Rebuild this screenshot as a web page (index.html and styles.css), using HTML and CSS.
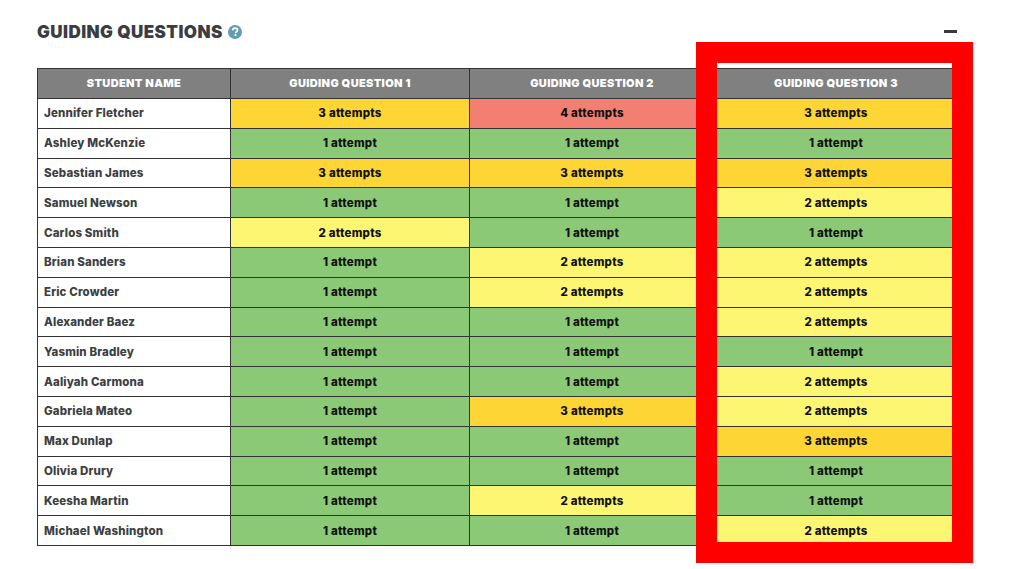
FILE: index.html
```html
<!DOCTYPE html>
<html lang="en">
<head>
<meta charset="utf-8">
<title>Guiding Questions</title>
<link rel="stylesheet" href="styles.css">
</head>
<body>
<main class="panel">
  <header class="panel-head">
    <h1 class="title">GUIDING QUESTIONS
      <svg class="help" viewBox="0 0 14 14" width="14" height="14" aria-hidden="true"><circle cx="7" cy="7" r="7" fill="#5f9fae"/><path d="M4.6 5.4C4.7 4 5.7 3.2 7.1 3.2C8.5 3.2 9.5 4 9.5 5.2C9.5 6.6 7.6 6.8 7.6 8.2" fill="none" stroke="#fff" stroke-width="1.7"/><rect x="6.6" y="9.2" width="1.8" height="1.8" fill="#fff"/></svg>
    </h1>
    <span class="collapse"></span>
  </header>
  <table class="grid">
    <colgroup><col class="c-name"><col class="c-q"><col class="c-q3"><col class="c-q4"></colgroup>
    <thead>
      <tr><th>STUDENT NAME</th><th>GUIDING QUESTION 1</th><th>GUIDING QUESTION 2</th><th>GUIDING QUESTION 3</th></tr>
    </thead>
    <tbody>
      <tr><td class="name">Jennifer Fletcher</td><td class="a3">3 attempts</td><td class="a4">4 attempts</td><td class="a3">3 attempts</td></tr>
      <tr><td class="name">Ashley McKenzie</td><td class="a1">1 attempt</td><td class="a1">1 attempt</td><td class="a1">1 attempt</td></tr>
      <tr><td class="name">Sebastian James</td><td class="a3">3 attempts</td><td class="a3">3 attempts</td><td class="a3">3 attempts</td></tr>
      <tr><td class="name">Samuel Newson</td><td class="a1">1 attempt</td><td class="a1">1 attempt</td><td class="a2">2 attempts</td></tr>
      <tr><td class="name">Carlos Smith</td><td class="a2">2 attempts</td><td class="a1">1 attempt</td><td class="a1">1 attempt</td></tr>
      <tr><td class="name">Brian Sanders</td><td class="a1">1 attempt</td><td class="a2">2 attempts</td><td class="a2">2 attempts</td></tr>
      <tr><td class="name">Eric Crowder</td><td class="a1">1 attempt</td><td class="a2">2 attempts</td><td class="a2">2 attempts</td></tr>
      <tr><td class="name">Alexander Baez</td><td class="a1">1 attempt</td><td class="a1">1 attempt</td><td class="a2">2 attempts</td></tr>
      <tr><td class="name">Yasmin Bradley</td><td class="a1">1 attempt</td><td class="a1">1 attempt</td><td class="a1">1 attempt</td></tr>
      <tr><td class="name">Aaliyah Carmona</td><td class="a1">1 attempt</td><td class="a1">1 attempt</td><td class="a2">2 attempts</td></tr>
      <tr><td class="name">Gabriela Mateo</td><td class="a1">1 attempt</td><td class="a3">3 attempts</td><td class="a2">2 attempts</td></tr>
      <tr><td class="name">Max Dunlap</td><td class="a1">1 attempt</td><td class="a1">1 attempt</td><td class="a3">3 attempts</td></tr>
      <tr><td class="name">Olivia Drury</td><td class="a1">1 attempt</td><td class="a1">1 attempt</td><td class="a1">1 attempt</td></tr>
      <tr><td class="name">Keesha Martin</td><td class="a1">1 attempt</td><td class="a2">2 attempts</td><td class="a1">1 attempt</td></tr>
      <tr><td class="name">Michael Washington</td><td class="a1">1 attempt</td><td class="a1">1 attempt</td><td class="a2">2 attempts</td></tr>
    </tbody>
  </table>
  <div class="highlight"></div>
</main>
</body>
</html>
```
FILE: styles.css
```css
html, body { margin: 0; padding: 0; background: #fff; }
body { font-family: "Inter", "Liberation Sans", sans-serif; }
.panel { position: relative; width: 1009px; height: 569px; box-sizing: border-box; padding: 21px 52px 0 37px; overflow: hidden; }
.panel-head { display: flex; justify-content: space-between; align-items: center; height: 21px; }
.title { margin: 0; padding-top: 2px; display: flex; align-items: center; gap: 5px; font-size: 17px; font-weight: 900; color: #3a3d42; letter-spacing: 0.45px; line-height: 21px; }
.help { margin-bottom: 2px; }
.collapse { display: block; width: 13px; height: 3px; background: #3a3a3a; }
.grid { margin-top: 26px; width: 920px; table-layout: fixed; border-collapse: collapse; font-size: 11.5px; font-weight: 800; letter-spacing: 0.25px; line-height: 14px; }
.c-name { width: 193px; }
.c-q { width: 239px; }
.c-q3 { width: 245px; }
.c-q4 { width: 243px; }
.grid th, .grid td { border: 1px solid #333; padding: 0; text-align: center; }
.grid thead tr { height: 30px; }
.grid tbody tr { height: 29.8px; }
.grid th { background: #808080; color: #fff; font-size: 11px; font-weight: 900; letter-spacing: 0.35px; padding-bottom: 1px; }
.grid td { color: #111; }
.grid td.name { text-align: left; padding-left: 6px; color: #3d3f42; background: #fff; letter-spacing: 0.15px; }
.a1 { background: #8bc977; }
.a2 { background: #fdf672; }
.a3 { background: #fdd535; }
.a4 { background: #f37f73; }
.highlight { position: absolute; left: 696px; top: 42px; width: 277px; height: 521px; box-sizing: border-box; border: 21px solid #f00; pointer-events: none; }
```
